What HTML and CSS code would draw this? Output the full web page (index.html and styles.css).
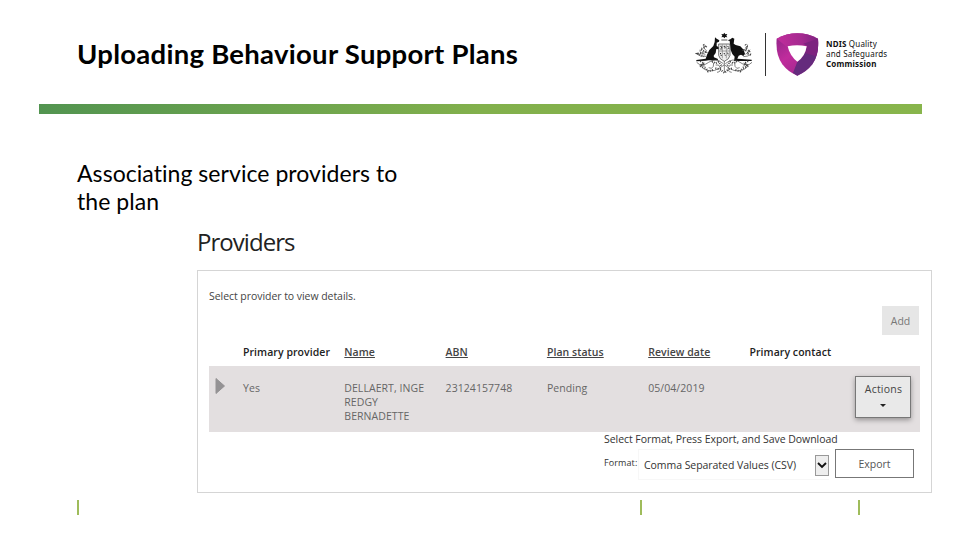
FILE: index.html
```html
<!DOCTYPE html>
<html lang="en">
<head>
    <meta charset="UTF-8">
    <meta name="viewport" content="width=device-width, initial-scale=1.0">
    <title>Uploading Behaviour Support Plans</title>
    <link rel="stylesheet" href="styles.css">
</head>
<body>
    <div class="slide">
        <header class="header">
            <h1>Uploading Behaviour Support Plans</h1>
            <div class="brand">
                <svg class="crest" viewBox="15 21 180 135">
                    <!-- star -->
                    <path d="M103 23l3 5 6-1-3 5 3 5-6-1-3 4-3-4-6 1 3-5-3-5 6 1z" fill="#111"/>
                    <path d="M94 45h18" stroke="#555" stroke-width="3"/>
                    <!-- kangaroo -->
                    <path d="M75 37l5 4 8 5-1 4-7 3v10l9 5-1 5-9-1-2 12-6 8 1 5 12 5-1 4H56l-9 1-28 2v-4l28-4 4-12 7-14 12-12 4-12z" fill="#111"/>
                    <!-- emu -->
                    <path d="M121 43l6-5 6 3-1 7-1 8 6 4 14 4 10 10 4 13-5 6-7-4-7 3-4 9 12 1 31 2v4h-53l2-13-7-8-5-12-2-18-1-9-6-2z" fill="#111"/>
                    <!-- shield -->
                    <path d="M86 57h34v34q-2 12-17 18-15-6-17-18z" fill="#eee" stroke="#333" stroke-width="2"/>
                    <path d="M97 58v42M109 58v42M87 78h32" stroke="#777" stroke-width="2"/>
                    <g fill="none" stroke="#222" stroke-width="3" stroke-dasharray="4 2">
                        <path d="M91 64h4v8h-5M101 64h5l-2 8M113 63l4 7-5 2M91 84l3 9M102 84l4 8M113 83l2 8"/>
                    </g>
                    <!-- wattle -->
                    <g fill="none" stroke="#444" stroke-width="2">
                        <path d="M50 78q-12-8-8-18M46 88q-18-3-16-14M48 94q-18 2-26-6M165 78q8-5 8-19M166 88q10-4 14-14M160 95q15 0 24-8"/>
                        <path d="M100 116Q77 96 56 112T20 112M102 120Q72 145 48 135t-4-21M106 116q23-20 44-4t36 0M104 120q29 25 54 15t2-21M103 108v34M65 110q9 4 5 14t-14 4M140 110q-9 4-5 14t14 4"/>
                        <path d="M77 120q10-4 14 8t-10 14M129 120q-10-4-14 8t10 14M28 123q10-10 17 2M176 123q-10-10-17 2"/>
                    </g>
                    <g fill="none" stroke="#444" stroke-width="6" stroke-dasharray="3 4">
                        <path d="M40 58l7 7-15 8 14 8-22 5 18 8M166 58l6 9-10 8 18 3-9 8 14 4M31 108l11 8-12 7 18 7 6 9 15-4M174 108l-11 8 12 7-18 7-6 9-15-4M66 108l10 7 10-5 8 12M140 108l-10 7-10-5-8 12M76 130l15 3 12 11 12-11 15-3"/>
                    </g>
                </svg>
                <div class="brand-line"></div>
                <svg class="shield" viewBox="33 21 132 135">
                    <defs>
                        <linearGradient id="left" x1="0" y1="0" x2="0.7" y2="1">
                            <stop offset="0" stop-color="#8c2487"/>
                            <stop offset="0.5" stop-color="#c02c9c"/>
                            <stop offset="1" stop-color="#9c278c"/>
                        </linearGradient>
                        <linearGradient id="top" x1="0" y1="0" x2="1" y2="0">
                            <stop offset="0" stop-color="#c12d9c"/>
                            <stop offset="0.6" stop-color="#a52a90"/>
                            <stop offset="1" stop-color="#7c2380"/>
                        </linearGradient>
                    </defs>
                    <path d="M35 41Q65 25 97 25t62 16q4 48-17 77-18 23-45 34-28-11-45-34Q31 89 35 41z" fill="url(#left)"/>
                    <path d="M35 41Q65 25 97 25t62 16l-1 32-30-10Q99 58 69 68z" fill="url(#top)"/>
                    <path d="M159 41q4 48-17 77-18 23-45 34l-13-8 13-34q22-15 29-45z" fill="#652b7d"/>
                    <path d="M159 41q3 29-6 53l-33-10q5-8 7-21l-12-7z" fill="#7d237f"/>
                    <path d="M68 64q28-7 57 0-4 30-28 46-22-16-29-46z" fill="#fff"/>
                </svg>
                <p class="brand-name"><b>NDIS</b> Quality<br>and Safeguards<br><b>Commission</b></p>
            </div>
        </header>
        <div class="bar"></div>
        <p class="subtitle">Associating service providers to<br>the plan</p>

        <section class="providers">
            <h2>Providers</h2>
            <div class="panel">
                <p class="hint">Select provider to view details.</p>
                <div class="toolbar"><button class="add">Add</button></div>
                <div class="row head">
                    <span></span>
                    <span>Primary provider</span>
                    <span><u>Name</u></span>
                    <span><u>ABN</u></span>
                    <span><u>Plan status</u></span>
                    <span><u>Review date</u></span>
                    <span>Primary contact</span>
                </div>
                <div class="row record">
                    <svg class="expand" viewBox="0 0 10 18"><path d="M1 1.5v15l8.500-7.500z" fill="#949294" stroke="#949294" stroke-linejoin="round"/></svg>
                    <span>Yes</span>
                    <span>DELLAERT, INGE<br>REDGY<br>BERNADETTE</span>
                    <span>23124157748</span>
                    <span>Pending</span>
                    <span>05/04/2019</span>
                    <span></span>
                    <button class="actions">Actions<i class="caret"></i></button>
                </div>
                <div class="export">
                    <p>Select Format, Press Export, and Save Download</p>
                    <div class="export-form">
                        <label>Format:</label>
                        <div class="select">
                            <span>Comma Separated Values (CSV)</span>
                            <div class="arrow">
                                <svg viewBox="0 0 10 8"><path d="M1 1l4 4 4-4" fill="none" stroke="#111" stroke-width="1.900"/></svg>
                            </div>
                        </div>
                        <button class="export-btn">Export</button>
                    </div>
                </div>
            </div>
        </section>

        <footer class="ticks"><i></i><i></i><i></i></footer>
    </div>
</body>
</html>
```

FILE: styles.css
```css
* {
    box-sizing: border-box;
}
body {
    margin: 0;
    background: #fff;
    color: #000;
    font-family: "Open Sans", sans-serif;
}
h1, h2, p {
    margin: 0;
}
button {
    font-family: inherit;
    padding: 0;
}
.slide {
    width: 960px;
    height: 540px;
    overflow: hidden;
}
.header {
    display: flex;
    justify-content: space-between;
    height: 104px;
    padding: 32px 66px 0 77px;
}
h1 {
    font-family: Lato, sans-serif;
    font-size: 27.5px;
    line-height: 44px;
    letter-spacing: 0.27px;
    white-space: nowrap;
}
.brand {
    display: flex;
    flex: none;
    align-items: flex-start;
    width: 199px;
}
.crest {
    width: 60px;
    height: 45px;
}
.brand-line {
    width: 1px;
    height: 43px;
    margin: 1px 10px 0;
    background: #333;
}
.shield {
    width: 44px;
    height: 45px;
}
.brand-name {
    margin: 7px 0 0 6px;
    font-family: "Noto Sans", sans-serif;
    font-size: 8px;
    line-height: 10px;
    letter-spacing: 0.18px;
    color: #111;
    white-space: nowrap;
}
.bar {
    width: 883px;
    height: 10px;
    margin-left: 39px;
    background: linear-gradient(90deg, #529450, #82b04c 50%, #88b54c);
}
.subtitle {
    height: 113px;
    padding: 45px 0 0 77px;
    font-family: Lato, sans-serif;
    font-size: 23px;
    line-height: 28px;
    letter-spacing: 0.05px;
}
.providers {
    width: 735px;
    margin-left: 197px;
}
h2 {
    height: 43px;
    font-size: 24px;
    font-weight: 400;
    line-height: 29px;
    letter-spacing: -0.95px;
    color: #222;
}
.panel {
    height: 223px;
    padding: 18px 11px 0;
    border: 1px solid #d5d5d5;
    font-size: 10.5px;
    line-height: 14px;
}
.hint {
    height: 17px;
    color: #444;
    letter-spacing: -0.05px;
}
.toolbar {
    display: flex;
    justify-content: flex-end;
    padding-right: 1px;
}
.add {
    width: 37px;
    height: 29px;
    border: 0;
    background: #e6e6e6;
    color: #777;
    font-size: 10.5px;
}
.row {
    display: grid;
    grid-template-columns: 34px repeat(5, 101.3px) 106px 56px;
    width: 711px;
}
.head {
    height: 31px;
    padding-top: 10px;
    font-weight: 600;
    letter-spacing: 0.06px;
    color: #222;
}
.head u {
    color: #444;
    text-underline-offset: 1px;
}
.record {
    height: 66px;
    padding-top: 15px;
    background: #e3dfe0;
    letter-spacing: 0.06px;
    color: #666;
}
.expand {
    width: 10px;
    height: 18px;
    margin: -4px 0 0 6px;
}
.actions {
    display: flex;
    flex-direction: column;
    align-items: center;
    width: 56px;
    height: 42px;
    margin-top: -5px;
    padding-top: 6px;
    border: 1px dotted #222;
    outline: 1px solid #777;
    outline-offset: -1px;
    background: #e9e9e9;
    box-shadow: 0 2px 5px rgba(0, 0, 0, 0.35);
    color: #444;
    font-size: 10.5px;
    line-height: 13px;
    letter-spacing: 0.2px;
}
.caret {
    margin-top: 8px;
    border: 3px solid transparent;
    border-top-color: #222;
    border-bottom: 0;
}
.export {
    padding-left: 395px;
    color: #333;
    letter-spacing: -0.05px;
}
.export p {
    height: 17px;
    white-space: nowrap;
}
.export-form {
    display: flex;
}
.export-form label {
    width: 34px;
    padding-top: 7px;
    font-size: 9px;
    letter-spacing: 0.1px;
}
.select {
    display: flex;
    justify-content: space-between;
    width: 191px;
    height: 31px;
    padding: 5px 0 0 5px;
    border: 1px solid #f7f7f7;
    border-right: 0;
    white-space: nowrap;
}
.select span {
    padding-top: 3px;
}
.arrow {
    display: flex;
    align-items: center;
    justify-content: center;
    width: 14px;
    height: 21px;
    border: 1px solid #999;
    background: #eee;
}
.arrow svg {
    flex: none;
    width: 10px;
    height: 8px;
}
.export-btn {
    width: 79px;
    height: 29px;
    margin-left: 6px;
    border: 1px solid #777;
    background: #fff;
    color: #555;
    font-size: 10.5px;
}
.ticks {
    display: grid;
    grid-template-columns: 563px 218px 2px;
    padding: 7px 0 0 77px;
}
.ticks i {
    width: 2px;
    height: 15px;
    background: #9fbc5b;
}
```
